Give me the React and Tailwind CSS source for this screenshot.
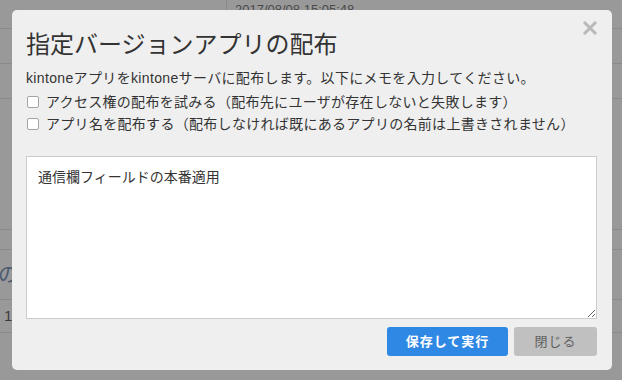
import React from "react";

const FONT = {
  fontFamily: '"Liberation Sans", "Noto Sans CJK JP", sans-serif',
};

function Checkbox({ label }) {
  return (
    <label className="flex items-center h-[22px] pl-[1px]">
      <input
        type="checkbox"
        className="appearance-none w-[12px] h-[12px] border border-[#a5a5a5] rounded-[2px] bg-white shrink-0"
      />
      <span className="ml-[7px] text-[14px] tracking-[0.3px] text-[#333] whitespace-nowrap">{label}</span>
    </label>
  );
}

export default function App() {
  return (
    <div
      className="relative w-[622px] h-[380px] overflow-hidden bg-[#999]"
      style={FONT}
    >
      {/* background page (dimmed) */}
      <div className="flex flex-col w-full">
        <div className="flex h-[29px] border-b border-[#8a8a8a]">
          <div className="w-[226px]" />
          <div className="border-l border-[#8a8a8a] pl-[8px] pt-[2px] text-[13px] leading-[16px] text-[#4a4a4a]">
            2017/08/08 15:05:48
          </div>
        </div>
        <div className="h-[35px] border-b border-[#8a8a8a]" />
        <div className="h-[35px] border-b border-[#8a8a8a]" />
        <div className="h-[131px] border-b border-[#8a8a8a]" />
        <div className="h-[20px] border-b border-[#8a8a8a]" />
        <div className="h-[50px] border-b border-[#8a8a8a] flex items-center">
          <span className="text-[20px] text-[#4b5a70] ml-[-2px]">の</span>
        </div>
        <div className="h-[33px] border-b border-[#8a8a8a] flex items-center pl-[4px]">
          <span className="text-[15px] text-[#3a3a3a]">1</span>
        </div>
      </div>

      {/* modal */}
      <div className="absolute left-[12px] top-[10px] w-[600px] h-[360px] bg-[#efefef] rounded-[5px] pt-[21px] pl-[14px] pr-[15px] pb-[14px] flex flex-col">
        <button className="absolute right-[15px] top-[11px] w-[14px] h-[14px] flex items-center justify-center">
          <svg width="14" height="14" viewBox="0 0 14 14">
            <path d="M2 2 L12 12 M12 2 L2 12" stroke="#b9b9b9" strokeWidth="3" strokeLinecap="square" />
          </svg>
        </button>

        <h1 className="text-[24px] leading-[28px] text-[#333] whitespace-nowrap">
          指定バージョンアプリの配布
        </h1>
        <p className="mt-[9px] text-[14px] leading-[20px] tracking-[0.35px] text-[#333] whitespace-nowrap">
          kintoneアプリをkintoneサーバに配布します。以下にメモを入力してください。
        </p>
        <div className="mt-[3px] flex flex-col">
          <Checkbox label="アクセス権の配布を試みる（配布先にユーザが存在しないと失敗します）" />
          <Checkbox label="アプリ名を配布する（配布しなければ既にあるアプリの名前は上書きされません）" />
        </div>

        <textarea
          className="mt-[21px] w-[571px] h-[163px] bg-white border border-[#ccc] px-[11px] pt-[10px] text-[14px] leading-[20px] text-[#333] outline-none resize"
          style={FONT}
          defaultValue="通信欄フィールドの本番適用"
        />

        <div className="mt-[8px] flex justify-end gap-[6px]">
          <button className="w-[121px] h-[29px] rounded-[3px] bg-[#3088e5] text-white text-[13px] font-bold tracking-[1px]">
            保存して実行
          </button>
          <button className="w-[83px] h-[29px] rounded-[3px] bg-[#c0c0c0] text-[#5f5f5f] text-[13px] tracking-[1px]">
            閉じる
          </button>
        </div>
      </div>
    </div>
  );
}
